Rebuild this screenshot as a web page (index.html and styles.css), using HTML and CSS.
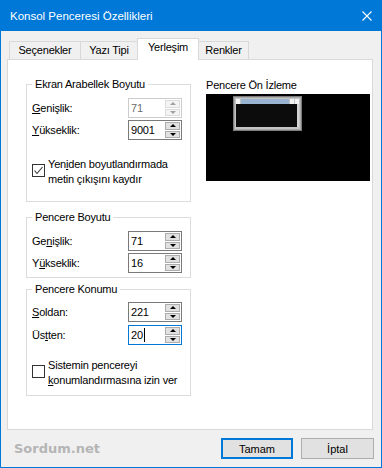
FILE: index.html
```html
<!DOCTYPE html>
<html lang="tr">
<head>
  <meta charset="UTF-8" />
  <title>Konsol Penceresi Özellikleri</title>
  <link rel="stylesheet" href="styles.css">
</head>
<body>
  <div class="window">
    <div class="titlebar">
      <span class="title">Konsol Penceresi Özellikleri</span>
      <svg class="close" width="10" height="10" viewBox="0 0 10 10"><path d="M0.5 0.5 L9.5 9.5 M9.5 0.5 L0.5 9.5" stroke="#fff" stroke-width="1.1" fill="none"/></svg>
    </div>
    <div class="client">
      <div class="tabs">
        <div class="tab tab-opts">Seçenekler</div>
        <div class="tab tab-font">Yazı Tipi</div>
        <div class="tab tab-layout active">Yerleşim</div>
        <div class="tab tab-colors">Renkler</div>
      </div>
      <div class="panel">
        <div class="left">
          <fieldset class="group g-buffer">
            <legend>Ekran Arabellek Boyutu</legend>
            <div class="row">
              <label><u>G</u>enişlik:</label>
              <div class="spin disabled"><span class="val">71</span><span class="arrows"><i class="up"></i><i class="down"></i></span></div>
            </div>
            <div class="row">
              <label><u>Y</u>ükseklik:</label>
              <div class="spin"><span class="val">9001</span><span class="arrows"><i class="up"></i><i class="down"></i></span></div>
            </div>
            <div class="check">
              <span class="box"><svg width="11" height="11" viewBox="0 0 11 11"><path d="M1.5 5.5 L4 8.5 L9.5 2" stroke="#333" stroke-width="1.1" fill="none"/></svg></span>
              <span class="ctext">Yen<u>i</u>den boyutlandırmada<br>metin çıkışını kaydır</span>
            </div>
          </fieldset>

          <fieldset class="group g-size">
            <legend>Pencere Boyutu</legend>
            <div class="row">
              <label>Ge<u>n</u>işlik:</label>
              <div class="spin"><span class="val">71</span><span class="arrows"><i class="up"></i><i class="down"></i></span></div>
            </div>
            <div class="row">
              <label>Y<u>ü</u>kseklik:</label>
              <div class="spin"><span class="val">16</span><span class="arrows"><i class="up"></i><i class="down"></i></span></div>
            </div>
          </fieldset>

          <fieldset class="group g-pos">
            <legend>Pencere Konumu</legend>
            <div class="row">
              <label><u>S</u>oldan:</label>
              <div class="spin"><span class="val">221</span><span class="arrows"><i class="up"></i><i class="down"></i></span></div>
            </div>
            <div class="row">
              <label>Üs<u>t</u>ten:</label>
              <div class="spin focus"><span class="val">20<span class="caret"></span></span><span class="arrows"><i class="up"></i><i class="down"></i></span></div>
            </div>
            <div class="check">
              <span class="box"></span>
              <span class="ctext">Sistemin pencereyi<br><u>k</u>onumlandırmasına izin ver</span>
            </div>
          </fieldset>
        </div>

        <div class="right">
          <div class="plabel">Pencere Ön İzleme</div>
          <div class="screen">
            <svg class="mini" width="69" height="35" viewBox="0 0 69 35">
              <rect x="0" y="0" width="69" height="35" fill="#7c7c7c"/>
              <rect x="1" y="1" width="67" height="33" fill="#a9a9a9"/>
              <rect x="2" y="2" width="65" height="31" fill="#c4c4c4"/>
              <rect x="3" y="3" width="4" height="5" fill="#f4f4f4"/>
              <rect x="8" y="3" width="48" height="5" fill="#99b4d1"/>
              <rect x="57" y="3" width="4" height="5" fill="#f4f4f4"/>
              <rect x="62" y="3" width="4" height="5" fill="#f4f4f4"/>
              <rect x="3" y="8" width="61" height="23" fill="#0c0c0c"/>
              <rect x="64" y="8" width="2" height="23" fill="#d4d4d4"/>
            </svg>
          </div>
        </div>
      </div>

      <div class="footer">
        <span class="brand">Sordum.net</span>
        <button class="btn default">Tamam</button>
        <button class="btn">İptal</button>
      </div>
    </div>
  </div>
</body>
</html>
```

FILE: styles.css
```css
* {
  box-sizing: border-box;
}
body {
  margin: 0;
  font-family: "Liberation Sans", Arial, sans-serif;
  font-size: 11px;
  letter-spacing: -0.2px;
  color: #000;
}
.window {
  width: 382px;
  height: 468px;
  display: flex;
  flex-direction: column;
  background: #f0f0f0;
}
.titlebar {
  height: 31px;
  flex: none;
  background: #0078d7;
  color: #fff;
  display: flex;
  align-items: center;
  padding: 0 10px;
  font-size: 11.5px;
  letter-spacing: 0;
}
.close {
  margin-left: auto;
}
.client {
  flex: 1;
  border: 1px solid #0078d7;
  border-top: none;
  padding: 7px 7px 0 6px;
}
.tabs {
  display: flex;
  align-items: flex-end;
  height: 21px;
  padding-left: 2px;
}
.tab {
  height: 18px;
  border: 1px solid #d9d9d9;
  border-bottom: none;
  background: #f0f0f0;
  text-align: center;
  line-height: 17px;
  margin-left: -1px;
}
.tab-opts { width: 72px; margin-left: 0; }
.tab-font { width: 58px; }
.tab-layout { width: 62px; }
.tab-colors { width: 51px; }
.tab.active {
  height: 22px;
  margin-bottom: -1px;
  background: #fff;
  position: relative;
  z-index: 1;
}
.panel {
  width: 366px;
  height: 371px;
  border: 1px solid #d9d9d9;
  background: #fff;
  display: flex;
  gap: 15px;
  padding: 0 2px 0 18px;
}
.left {
  width: 165px;
  padding-top: 17px;
}
.group {
  margin: 0;
  min-width: 0;
  width: 165px;
  border: 1px solid #dcdcdc;
  padding: 7px 8px 12px 5px;
}
.group legend {
  padding: 0 3px;
  line-height: 14px;
}
.g-buffer { padding-bottom: 14px; }
.g-size { margin-top: 8px; padding-bottom: 4px; }
.g-pos { margin-top: 4px; padding-top: 6px; padding-bottom: 7px; }
.g-pos .row + .row { margin-top: 3px; }

.row {
  display: flex;
  align-items: center;
  height: 20px;
}
.row + .row {
  margin-top: 2px;
}
.row label {
  width: 96px;
}
.spin {
  width: 54px;
  height: 20px;
  border: 1px solid #7a7a7a;
  background: #fff;
  display: flex;
}
.spin .val {
  flex: 1;
  padding-left: 2px;
  line-height: 18px;
  display: flex;
  align-items: center;
}
.spin.focus {
  border-color: #0078d7;
}
.caret {
  display: inline-block;
  width: 1px;
  height: 14px;
  background: #000;
  margin-left: 1px;
}
.arrows {
  width: 16px;
  display: flex;
  flex-direction: column;
  gap: 1px;
  padding: 1px 1px 1px 0;
}
.arrows i {
  flex: 1;
  background: #e1e1e1;
  border: 1px solid #adadad;
  display: flex;
  align-items: center;
  justify-content: center;
}
.arrows i::before {
  content: "";
  border-left: 3px solid transparent;
  border-right: 3px solid transparent;
}
.arrows .up::before {
  border-bottom: 3px solid #000;
}
.arrows .down::before {
  border-top: 3px solid #000;
}
.spin.disabled {
  border-color: #cccccc;
  color: #6d6d6d;
}
.spin.disabled .arrows i {
  background: #f4f4f4;
  border-color: #dcdcdc;
}
.spin.disabled .arrows .up::before { border-bottom-color: #a0a0a0; }
.spin.disabled .arrows .down::before { border-top-color: #a0a0a0; }

.check {
  display: flex;
  align-items: flex-start;
  gap: 3px;
  margin-top: 17px;
}
.g-pos .check {
  margin-top: 13px;
}
.box {
  width: 13px;
  height: 13px;
  flex: none;
  border: 1px solid #333;
  background: #fff;
  margin-top: 7px;
  display: flex;
}
.ctext {
  line-height: 15px;
  white-space: nowrap;
}

.right {
  width: 164px;
  padding-top: 18px;
}
.plabel {
  line-height: 14px;
  margin-bottom: 2px;
}
.screen {
  height: 87px;
  background: #000;
  padding: 2px 0 0 27px;
}
.mini {
  display: block;
}

.footer {
  display: flex;
  align-items: flex-start;
  padding: 8px 0 0 7px;
}
.brand {
  font-family: "DejaVu Sans", sans-serif;
  font-weight: bold;
  font-size: 13px;
  line-height: 15px;
  letter-spacing: 0;
  color: #b5b5b5;
  margin-top: 3px;
}
.btn {
  width: 73px;
  height: 21px;
  padding: 0;
  border: 1px solid #adadad;
  background: #e1e1e1;
  font: inherit;
  color: #000;
}
.btn.default {
  width: 72px;
  margin-left: auto;
  border: 2px solid #0078d7;
}
.btn + .btn {
  margin-left: 8px;
}
```
